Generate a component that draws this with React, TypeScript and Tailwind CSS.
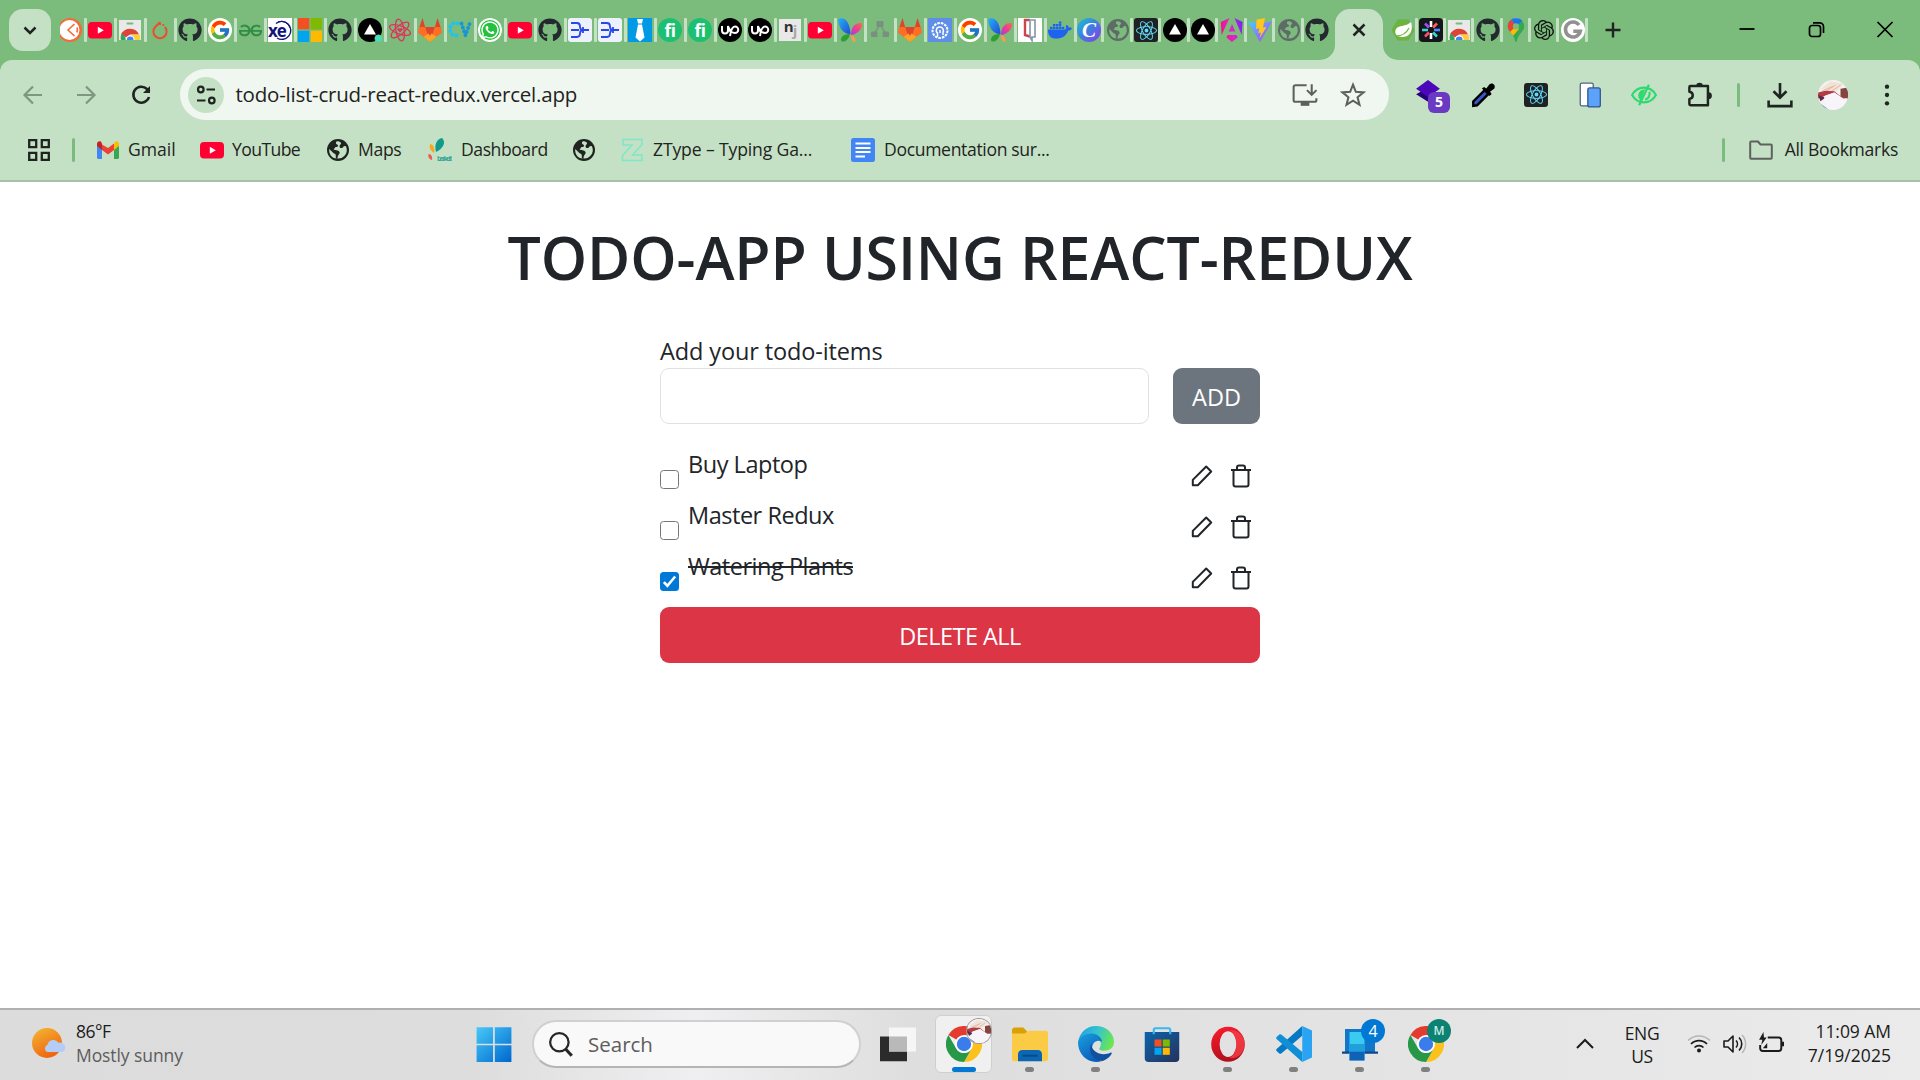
import React from "react";
import { FaGithub, FaWhatsapp } from "react-icons/fa";
import { FcGoogle } from "react-icons/fc";
import { SiReact, SiDocker, SiGeeksforgeeks, SiOpenai } from "react-icons/si";

type P = { children?: React.ReactNode; s?: number; className?: string };
const Svg = ({ children, s = 24, className = "" }: P) => (
  <svg width={s} height={s} viewBox="0 0 24 24" fill="none" className={"block shrink-0 " + className}>
    {children}
  </svg>
);

const YouTube = () => (
  <Svg>
    <rect x="0" y="4" width="24" height="16.5" rx="4" fill="#ff0033" />
    <path d="M9.8 8.8v7l6-3.5z" fill="#fff" />
  </Svg>
);
const Github = () => <FaGithub size={24} color="#24292f" />;
const Google = () => (
  <div className="flex size-6 items-center justify-center rounded-full bg-white">
    <FcGoogle size={22} />
  </div>
);
const Postman = () => (
  <Svg>
    <defs>
      <clipPath id="postman"><path d="M2 0h22v24H2z" /></clipPath>
    </defs>
    <g clipPath="url(#postman)">
      <circle cx="12" cy="12" r="12" fill="#f26b3a" />
      <circle cx="11.500" cy="12" r="10" fill="#fff" />
      <path d="m16.500 6-6.500 6 6.500 6M18.800 9.500c.8 1.500.8 3.500 0 5" stroke="#f26b3a" strokeWidth="1.600" />
    </g>
  </Svg>
);
const WebStore = () => (
  <Svg>
    <path d="M1 2h22v20H1z" fill="#e9e9e9" />
    <rect x="8.5" y="4.5" width="7" height="2" rx="1" fill="#7bbb7c" />
    <path d="M3 22a9.5 9.5 0 0 1 1.5-8l4 8z" fill="#34a853" />
    <path d="M3.5 15.5a10 10 0 0 1 17.5 1H12l-4 3z" fill="#db4437" />
    <path d="M13 16.5h8.5A9 9 0 0 1 22 22h-6z" fill="#ffcd40" />
    <path d="M7.5 22a4.6 4.6 0 0 1 9.2 0z" fill="#fff" />
    <path d="M8.8 22a3.4 3.4 0 0 1 6.8 0z" fill="#4285f4" />
  </Svg>
);
const Torch = () => (
  <Svg>
    <path d="M12 4.2 7.2 9a6.6 6.6 0 1 0 9.6 0M12 4.2V7" stroke="#ee4c2c" strokeWidth="2" />
    <circle cx="15.3" cy="7" r="1.1" fill="#ee4c2c" />
  </Svg>
);
const Xe = () => (
  <div className="relative flex size-6 items-center bg-white">
    <Svg className="absolute inset-0">
      <path d="M8 5.5A9 9 0 1 1 9 20" stroke="#13137a" strokeWidth="1.4" />
      <path d="M10 4a9 9 0 0 1 12 6" stroke="#13137a" strokeWidth="1" />
    </Svg>
    <span className="relative font-['Open_Sans',sans-serif] text-[17px] leading-none font-bold tracking-[-1px] text-[#13137a]">xe</span>
  </div>
);
const Microsoft = () => (
  <Svg>
    <path d="M0 0h11.3v11.3H0z" fill="#f25022" />
    <path d="M12.7 0H24v11.3H12.7z" fill="#7fba00" />
    <path d="M0 12.7h11.3V24H0z" fill="#00a4ef" />
    <path d="M12.7 12.7H24V24H12.7z" fill="#ffb900" />
  </Svg>
);
const Vercel = ({ dot = false }: { dot?: boolean }) => (
  <Svg>
    <circle cx="12" cy="12" r="12" fill="#000" />
    <path d="m12 6 6 10.5H6z" fill="#fff" />
    {dot && <circle cx="20.5" cy="20.5" r="3.7" fill="#45dfc0" stroke="#7bbb7c" strokeWidth=".6" />}
  </Svg>
);
const ReactHeart = () => (
  <Svg>
    <g stroke="#e0335b" strokeWidth="1.3">
      <ellipse cx="12" cy="12" rx="11" ry="4.2" transform="rotate(20 12 12)" />
      <ellipse cx="12" cy="12" rx="11" ry="4.2" transform="rotate(80 12 12)" />
      <ellipse cx="12" cy="12" rx="11" ry="4.2" transform="rotate(140 12 12)" />
    </g>
    <path d="M12 14.5 9.5 12c-1-1.6 1.4-3 2.5-1.2 1.1-1.800 3.500-.4 2.500 1.200z" fill="#e0335b" />
  </Svg>
);
const Gitlab = () => (
  <Svg>
    <path d="m12 24 4.500-13.500h-9z" fill="#e24329" />
    <path d="M4.500 0 1 10.500h6.500zM19.500 0 23 10.500h-6.500z" fill="#e24329" />
    <path d="m1 9-1 5.500L12 24 7 9zM23 9l1 5.500L12 24l5-15z" fill="#fc6d26" />
    <path d="M12 24 5.500 18.800 12 14.500l6.500 4.300z" fill="#fca326" />
    <path d="M7 9h10l-5 9z" fill="#e24329" />
  </Svg>
);
const Cv = () => (
  <Svg>
    <path d="M9.500 5.500C5 3.500 2 7 2 11s3 8 8.500 6" stroke="#1fc3ee" strokeWidth="3.800" strokeLinecap="round" strokeDasharray=".1 4.200" />
    <path d="m13.500 5.500 4 12 4.500-13" stroke="#1597d4" strokeWidth="3.800" strokeLinecap="round" strokeDasharray=".1 4" />
  </Svg>
);
const WhatsApp = () => (
  <div className="flex size-6 items-center justify-center rounded-full bg-[#25c13d] ring-2 ring-white ring-inset">
    <FaWhatsapp size={20} color="#fff" />
  </div>
);
const Merge = () => (
  <Svg>
    <rect width="24" height="24" rx="3" fill="#edf1fb" />
    <path d="M3 5h6c2 0 3 1 3 3.500S13 12 15 12h6M3 12h8M3 19h6c2 0 3-1 3-3.500s1-3.500 3-3.500" stroke="#2747e8" strokeWidth="1.800" />
    <path d="M15 9v6" stroke="#2747e8" strokeWidth="1.800" />
  </Svg>
);
const Tie = () => (
  <Svg>
    <path d="M0 0h24v24H0z" fill="#0099e6" />
    <path d="M9 1h6l-1 4.500h-4zM10 6.500h4l2.500 13L12 23.500l-4.500-4z" fill="#fff" />
  </Svg>
);
const Fiverr = () => (
  <div className="flex size-6 items-center justify-center rounded-full bg-[#1dbf73] font-['Open_Sans',sans-serif] text-[17px] leading-none font-bold tracking-[-0.400px] text-white">
    fi
  </div>
);
const Upwork = () => (
  <Svg>
    <circle cx="12" cy="12" r="12" fill="#000" />
    <path d="M4 8v4.500a3 3 0 0 0 6 0V8c.8 3.500 2 5.500 3.500 6.500M12 18c.6-4 1.500-9.500 5-9.500a3.200 3.200 0 0 1 0 6.500c-3 0-5-2.500-6-5" stroke="#fff" strokeWidth="2" />
  </Svg>
);
const Nj = () => (
  <div className="flex size-6 items-center justify-center p-px">
    <div className="flex size-full justify-center bg-[#e9e9e9] font-['Open_Sans',sans-serif] text-[15px] leading-[14px] font-bold tracking-[-1px]">
      <span className="text-[#333]">n</span>
      <span className="pt-1 text-[#aaa]">j</span>
    </div>
  </div>
);
const Butterfly = () => (
  <Svg>
    <defs>
      <linearGradient id="wing1" x1="0" y1="0" x2="1" y2="1">
        <stop offset="0" stopColor="#21b6f2" />
        <stop offset="1" stopColor="#2348d8" />
      </linearGradient>
      <linearGradient id="wing2" x1="1" y1="0" x2="0" y2="1">
        <stop offset="0" stopColor="#fb6a3d" />
        <stop offset=".5" stopColor="#ee3c96" />
        <stop offset="1" stopColor="#a13ce0" />
      </linearGradient>
    </defs>
    <path d="M0 1c6-3 12 2 12.500 15C4 16 1 9 0 1z" fill="url(#wing1)" />
    <path d="M13 17c0-8 4-12 10-12 2.500 0 1 10-10 12z" fill="url(#wing2)" />
    <path d="M12 16c-4 0-8 1-9 5s7 4 9-5z" fill="#2f9e35" />
    <path d="M13 17c3 0 6 5 4 7-2 0-4-2-4-7z" fill="#fb9a4b" />
  </Svg>
);
const Cluster = () => (
  <Svg>
    <g fill="#7b8f80">
      <rect x="8.500" y="3" width="7" height="6" rx="1" />
      <rect x="3" y="13.500" width="6.500" height="5.500" rx="1" />
      <rect x="14.500" y="13.500" width="6.500" height="5.500" rx="1" />
    </g>
    <path d="m10.500 9-4 6M13.500 9l4 6" stroke="#7b8f80" strokeWidth="1.300" />
  </Svg>
);
const Gear = () => (
  <Svg>
    <path d="M0 0h24v24H0z" fill="#5f8ee8" />
    <circle cx="12" cy="12.500" r="7.500" stroke="#fff" strokeWidth="2" strokeDasharray="2.600 1" />
    <path d="M9.500 19v-4c-2-1-1.500-6 2-6s4.500 3 3.500 5.500V17M12 12v3" stroke="#fff" strokeWidth="1.500" />
  </Svg>
);
const Book = () => (
  <Svg>
    <path d="M0 0h24v24H0z" fill="#fff" />
    <path d="M12 2H7v15l5 1.500" stroke="#c9474b" strokeWidth="2.400" />
    <path d="M11 2h6v17h-3v3.500L12 19V3" stroke="#8593a8" strokeWidth="1.600" />
  </Svg>
);
const Canva = () => (
  <div className="flex size-6 items-center justify-center rounded-full bg-linear-to-br from-[#00c4cc] via-[#3e7be0] to-[#7d2ae8] font-['Liberation_Serif',serif] text-[21px] leading-none font-bold text-white italic">
    C
  </div>
);
const Globe = ({ c = "#5f6b66", bg = "#7bbb7c" }: { c?: string; bg?: string }) => (
  <Svg>
    <circle cx="12" cy="12" r="11" fill={c} />
    <path d="M11 3.300c-1.500 1-1.500 2.500 0 3.200 2 .8 1 2.500-1 2.500-1.500 0-1 2-2.500 2 1 2 5 .5 6 3 .8 2-2 2.500-2 6.500C6 21 2.500 16 3.300 11l4 4c1 .8 2.500.5 2.500 2.500v2.500c5 2 11-2 11-8 0-1.500-.5-3-1.200-4-1 0-2 .2-2.600 1.200-1 1.500-3.500 1-3.500-1 0-1.500 2-1.500 1.500-3.400-1.500-1.200-2.500-1.500-4-1.500z" fill={bg} />
  </Svg>
);
const ReactTile = () => (
  <div className="flex size-6 items-center justify-center rounded-[3px] bg-[#1f2223]">
    <SiReact size={21} color="#61dafb" />
  </div>
);
const Angular = () => (
  <Svg>
    <defs>
      <linearGradient id="ng" x1="0" y1=".6" x2="1" y2=".3">
        <stop offset="0" stopColor="#f3117e" />
        <stop offset=".5" stopColor="#e025c8" />
        <stop offset="1" stopColor="#7b22f0" />
      </linearGradient>
    </defs>
    <path d="M14.500 0 22.500 4l-.8 13zM9.500 0 .8 4l.8 13zM17.600 19.500 12 24l-5.600-4.500L7.500 17h9zM8.800 13.500 12 6l3.200 7.500z" fill="url(#ng)" />
  </Svg>
);
const Vite = () => (
  <Svg>
    <defs>
      <linearGradient id="vt" x1="0" y1="0" x2="1" y2="1">
        <stop offset="0" stopColor="#41d1ff" />
        <stop offset="1" stopColor="#bd34fe" />
      </linearGradient>
    </defs>
    <path d="m0 3.500 12 20.500L24 3.500 12 5.500z" fill="url(#vt)" />
    <path d="M17 0 8.500 1.700 8 11l3.300-.7-1 5 2.700-.8-1.500 6L18.500 9l-3.500.6z" fill="#ffc61c" />
  </Svg>
);
const Spring = () => (
  <Svg>
    <path d="M6.500 1.500h11L23.500 12l-6 10.500h-11L.5 12z" fill="#6db33f" />
    <path d="M20 4c2 6 1 15-9 15-6 0-8-4-6-8s10-2 15-7z" fill="#fff" />
    <path d="M5 18c5 0 10-2 13-8" stroke="#6db33f" strokeWidth="1.200" />
  </Svg>
);
const Asterisk = () => (
  <Svg>
    <rect width="24" height="24" rx="4" fill="#15161a" />
    <g strokeWidth="2.600">
      <path d="M12 3v6" stroke="#fff" />
      <path d="m18 5.500-4 4" stroke="#ff5c5c" />
      <path d="M21 12h-6" stroke="#4b8cff" />
      <path d="m18 18.500-4-4" stroke="#38d6ce" />
      <path d="M12 21v-6" stroke="#fff" />
      <path d="m6 18.500 4-4" stroke="#ff4f70" />
      <path d="M3 12h6" stroke="#38d6ce" />
      <path d="m6 5.500 4 4" stroke="#a04cff" />
    </g>
  </Svg>
);
const MapsPin = () => (
  <Svg>
    <defs>
      <clipPath id="pin">
        <path d="M12 0a8.300 8.300 0 0 0-8.300 8.300c0 5 6.300 7.700 7.500 15 .2.900 1.400.9 1.600 0 1.200-7.300 7.500-10 7.500-15A8.300 8.300 0 0 0 12 0z" />
      </clipPath>
    </defs>
    <g clipPath="url(#pin)">
      <path d="M0 0h24v24H0z" fill="#34a853" />
      <path d="M0 8 7 0h14l-9 8.300z" fill="#4285f4" />
      <path d="M0 0h6l6 8.300L5 15 0 12z" fill="#ea4335" />
      <path d="m5 15 7-7 3 3-7 8z" fill="#fbbc04" />
      <path d="m12 8.300 8-7H8z" fill="#1a73e8" />
    </g>
    <circle cx="12" cy="8.300" r="3.100" fill="#7bbb7c" />
  </Svg>
);
const GrayG = () => (
  <Svg>
    <circle cx="12" cy="12" r="12" fill="#fff" />
    <path d="M18 7A7.500 7.500 0 1 0 19.300 13.200h-7" stroke="#919191" strokeWidth="3.600" />
  </Svg>
);
const Geeks = () => <SiGeeksforgeeks size={23} color="#2f8d46" />;
const Docker = () => <SiDocker size={24} color="#1d63ed" />;
const OpenAi = () => <SiOpenai size={20} color="#111" />;

const leadingTabs = [
  Postman, YouTube, WebStore, Torch, Github, Google, Geeks, Xe, Microsoft, Github,
  () => <Vercel dot />, ReactHeart, Gitlab, Cv, WhatsApp, YouTube, Github, Merge, Merge, Tie,
  Fiverr, Fiverr, Upwork, Upwork, Nj, YouTube, Butterfly, Cluster, Gitlab, Gear,
  Google, Butterfly, Book, Docker,
];
const middleTabs = [Canva, Globe, ReactTile, Vercel, Vercel, Angular, Vite, Globe, Github];
const trailingTabs = [Spring, Asterisk, WebStore, Github, MapsPin, OpenAi, GrayG];

const Sep = () => <span className="block h-6 w-[3px] shrink-0 rounded-[1px] bg-[#c5e1c5]" />;

function TabStrip() {
  return (
    <div className="flex h-[60px] bg-[#7bbb7c]">
      <button className="mt-[9px] ml-[9px] flex size-[42px] shrink-0 items-center justify-center rounded-[14px] bg-[#c5e1c5]">
        <Svg>
          <path d="m6.500 9.500 5.500 5.500 5.500-5.500" stroke="#1f2421" strokeWidth="2.500" />
        </Svg>
      </button>
      <div className="ml-1.5 flex h-[60px] items-center">
        {leadingTabs.map((Icon, i) => (
          <div key={i} className="flex w-[30px] shrink-0 items-center justify-between pl-px">
            <span className="flex size-6 items-center justify-center"><Icon /></span>
            <Sep />
          </div>
        ))}
      </div>
      <div className="-ml-px flex h-[60px] items-center">
        {middleTabs.map((Icon, i) => (
          <div key={i} className="flex w-[28.5px] shrink-0 items-center pl-px">
            <span className="flex size-6 shrink-0 items-center justify-center"><Icon /></span>
            {i < middleTabs.length - 1 && <Sep />}
          </div>
        ))}
      </div>
      <div className="mt-[9px] ml-[2px] flex items-end">
        <Svg s={15} className="-ml-[15px]">
          <path d="M24 0v24H0A24 24 0 0 0 24 0z" fill="#c5e1c5" />
        </Svg>
        <div className="flex h-[51px] w-12 items-center justify-center rounded-t-[15px] bg-[#c5e1c5] pb-[9px]">
          <Svg>
            <path d="m6.500 6.500 11 11M17.500 6.500l-11 11" stroke="#1f2421" strokeWidth="2.500" />
          </Svg>
        </div>
        <Svg s={15} className="-mr-[15px]">
          <path d="M0 0v24h24A24 24 0 0 1 0 0z" fill="#c5e1c5" />
        </Svg>
      </div>
      <div className="ml-[7px] flex h-[60px] items-center">
        {trailingTabs.map((Icon, i) => (
          <div key={i} className="flex w-[28.400px] shrink-0 items-center pl-px">
            <span className="flex size-6 shrink-0 items-center justify-center"><Icon /></span>
            <Sep />
          </div>
        ))}
      </div>
      <div className="ml-[13px] flex h-[60px] items-center">
        <Svg>
          <path d="M12 4.500v15M4.500 12h15" stroke="#1f2421" strokeWidth="2.400" />
        </Svg>
      </div>
      <div className="mr-[23px] ml-auto flex h-[60px] items-center gap-[45px]">
        <Svg><path d="M4.500 11h15" stroke="#000" strokeWidth="1.800" /></Svg>
        <Svg>
          <rect x="5.500" y="7.500" width="11" height="11" rx="2.500" stroke="#000" strokeWidth="1.700" />
          <path d="M9 4.800h6.500a4 4 0 0 1 4 4V15" stroke="#000" strokeWidth="1.700" />
        </Svg>
        <Svg><path d="m4.500 4 15 15M19.500 4l-15 15" stroke="#000" strokeWidth="1.700" /></Svg>
      </div>
    </div>
  );
}

function Avatar({ size }: { size: number }) {
  return (
    <Svg s={size}>
      <defs>
        <clipPath id="avatar"><circle cx="12" cy="12" r="12" /></clipPath>
      </defs>
      <g clipPath="url(#avatar)">
        <path d="M0 0h24v24H0z" fill="#f6f2f3" />
        <path d="m2 7 8-6 11 2-7 7z" fill="#f3e3d7" />
        <path d="m3 9 9-4M5 10l9-6M8 11l10-7" stroke="#d9b29c" strokeWidth=".7" />
        <path d="m0 10 6-1.500 7 .5 5 4 3-6 3 1v6l-4 1-7-5-6 2-7 3z" fill="#b23b45" />
        <path d="m18 7 6-1v9l-6-2z" fill="#84453f" />
        <path d="m0 12 6 2-4 3z" fill="#5d2b48" />
        <path d="m5 13 8-3 9 6-2 8H5z" fill="#f7f4fa" />
        <path d="m1 19 7 5" stroke="#3f55b5" strokeWidth="1.200" />
      </g>
    </Svg>
  );
}

function Toolbar() {
  return (
    <div className="bg-[#7bbb7c]">
      <div className="flex h-[65px] items-center rounded-t-[12px] bg-[#c5e1c5] pt-[4px] pl-[21px]">
        <Svg><path d="M21 12H4M12 3.500 3.500 12l8.500 8.500" stroke="#7f9681" strokeWidth="2.200" /></Svg>
        <Svg className="ml-[29px]"><path d="M3 12h17M12 3.500l8.500 8.500-8.500 8.500" stroke="#7f9681" strokeWidth="2.200" /></Svg>
        <Svg className="ml-[31px]">
          <path d="M20 14a8 8 0 1 1-2-8l2.500 2.500" stroke="#1f2421" strokeWidth="2.500" />
          <path d="M21 3v7h-7z" fill="#1f2421" />
        </Svg>
        <div className="ml-[27px] flex h-[51px] w-[1209px] items-center rounded-full bg-[#f0f7f0] pl-[7.500px]">
          <div className="flex size-9 items-center justify-center rounded-full bg-[#c5e1c5]">
            <Svg>
              <circle cx="6.800" cy="6.500" r="2.800" stroke="#1f2421" strokeWidth="2.200" />
              <path d="M12.500 6.500H21M3 17.500h8.500" stroke="#1f2421" strokeWidth="2.200" />
              <circle cx="17.800" cy="17.500" r="2.800" stroke="#1f2421" strokeWidth="2.200" />
            </Svg>
          </div>
          <span className="ml-3 text-[20.500px] tracking-[-0.220px] text-[#1f2421]">todo-list-crud-react-redux.vercel.app</span>
          <Svg s={26} className="mr-[22px] ml-auto">
            <path d="M13.500 3H3.200C2 3 1.500 3.500 1.500 4.500v12.300c0 1 .5 1.500 1.700 1.500h17.600c1.200 0 1.700-.5 1.700-1.500V15" stroke="#5c615e" strokeWidth="1.900" />
            <path d="M8 18h8v4H8z" fill="#5c615e" />
            <path d="M18.200 2v9M13.800 7.500l4.400 4.400 4.400-4.400" stroke="#5c615e" strokeWidth="1.900" />
          </Svg>
          <Svg s={26} className="mr-[23px]">
            <path d="m12 2.500 2.600 6.600 7.100.5-5.500 4.500 1.800 7-6-3.800-6 3.800 1.800-7-5.500-4.500 7.100-.5z" stroke="#5c615e" strokeWidth="1.900" />
          </Svg>
        </div>
        <div className="relative ml-[26px] size-8">
          <Svg s={26}>
            <path d="m1 14 11 7 11-7-11-6z" fill="#25007a" />
            <path d="m1 9 11 7.500L23 9 12 1z" fill="#4b08b8" />
          </Svg>
          <span className="absolute top-[13px] left-[13px] flex h-[21px] w-[22px] items-center justify-center rounded-md bg-[#6a3bc2] text-[14px] leading-none font-bold text-white">5</span>
        </div>
        <Svg s={26} className="ml-[23px]">
          <path d="M3 22v-4L13.500 7.500l3.500 3.500L6.500 21.500z" fill="#3658c9" stroke="#000" strokeWidth="2.200" />
          <path d="m11 6 2-1.500 2 1.500 3-4c3-2 6 1 4.500 4l-4 3 1.500 2-2 2z" fill="#000" />
        </Svg>
        <div className="ml-[28px]"><ReactTile /></div>
        <Svg s={26} className="ml-[29px]">
          <path d="M3 2.500q0-1.500 1.500-1.500h9q1.500 0 1.500 1.500V22H4.500Q3 22 3 20.500z" fill="#fff" stroke="#53637e" strokeWidth="1.200" />
          <rect x="10" y="5.500" width="11.500" height="17.500" rx="1.800" fill="#5ba2fa" stroke="#35558c" strokeWidth="1.200" />
        </Svg>
        <Svg s={26} className="ml-[28px]">
          <path d="M1 12c5-9 17-9 22 0-5 9-17 9-22 0z" stroke="#2ed96f" strokeWidth="2" />
          <path d="M13 7c-7-1-8 8-4 10z" fill="#2ed96f" />
          <path d="m16.500 2.500-9 19M17 9c1 3-1 7-4 7" stroke="#2ed96f" strokeWidth="2" />
        </Svg>
        <Svg s={27} className="ml-[29px]">
          <path d="M4 4.500h15.500v17H4q-1 0-1-1V16c4-.5 4-6 0-6.500V5.500q0-1 1-1z" stroke="#1f2421" strokeWidth="2.200" strokeLinejoin="round" />
          <path d="M9 4.500a3 3 0 0 1 6 0zM20 10a3 3 0 0 1 0 6z" fill="#1f2421" />
        </Svg>
        <span className="ml-[24px] h-6 w-[3px] rounded-full bg-[#7bbb7c]" />
        <Svg s={26} className="ml-[27px]">
          <path d="M12 1v13M6 8.500l6 6 6-6M1.500 17v5.300h21V17" stroke="#1f2421" strokeWidth="2.400" />
        </Svg>
        <div className="ml-[25px]"><Avatar size={30} /></div>
        <Svg s={26} className="ml-[26px]">
          <g fill="#1f2421">
            <circle cx="12" cy="4.300" r="2" />
            <circle cx="12" cy="12" r="2" />
            <circle cx="12" cy="19.700" r="2" />
          </g>
        </Svg>
      </div>
    </div>
  );
}

const Gmail = () => (
  <Svg>
    <path d="M1 7v12.500C1 20.300 1.700 21 2.500 21H6V9z" fill="#4285f4" />
    <path d="M23 7v12.500c0 .8-.7 1.500-1.500 1.500H18V9z" fill="#34a853" />
    <path d="M18 6.500V12l5-4V6c0-2.500-2.700-3.500-4-2.300z" fill="#fbbc04" />
    <path d="M6 6.500V12l6 4.500 6-4.500V5.500L12 10z" fill="#ea4335" />
    <path d="M1 6v2l5 4V5.500L5 3.700C3.500 2.700 1 3.500 1 6z" fill="#c5221f" />
  </Svg>
);
const Baskets = () => (
  <div className="relative size-6 overflow-hidden">
    <Svg>
      <path d="M8 14C6 6 9 1 14 0c4 4 2 10-6 14z" fill="#109a8c" />
      <path d="M6 15C1 12 1 8 2.500 6 6 7 7 11 6 15z" fill="#f7a823" />
      <path d="M4 22c-4-1-4-5-3.500-6 3 0 4 3 3.500 6z" fill="#ee5a4f" />
    </Svg>
    <span className="absolute bottom-0 left-[9px] text-[7px] leading-none font-bold tracking-[-1.800px] text-[#3aa79a]">basketi</span>
  </div>
);
const ZType = () => (
  <Svg>
    <path d="M2 1.500h19v5L11.500 17H21v5.500H1.500v-5L11 7H2z" stroke="#7de8c8" strokeWidth="1.500" />
  </Svg>
);
const Docs = () => (
  <Svg>
    <rect width="24" height="24" rx="2.500" fill="#4285f4" />
    <path d="M4.500 5.500h15M4.500 10h15M4.500 14h15M4.500 18.500h9.500" stroke="#fff" strokeWidth="2.200" />
  </Svg>
);

function Bookmarks() {
  return (
    <div className="flex h-[57px] items-start border-b-2 border-[#a6c1a7] bg-[#c5e1c5] pt-[13px] pl-[27px] text-[17.600px] leading-[23px] tracking-[-0.350px] text-[#1f2421]">
      <Svg>
        <path d="M2.200 2.200h7v7h-7zM14.800 2.200h7v7h-7zM2.200 14.800h7v7h-7zM14.800 14.800h7v7h-7z" stroke="#1f2421" strokeWidth="2.300" />
      </Svg>
      <span className="ml-[21px] h-6 w-[3px] rounded-full bg-[#7bbb7c]" />
      <div className="ml-[21px] flex w-[104px] shrink-0 gap-2"><Gmail /><span className="tracking-normal">Gmail</span></div>
      <div className="flex w-[126px] shrink-0 gap-2"><YouTube /><span className="tracking-[-0.600px]">YouTube</span></div>
      <div className="flex w-[102px] shrink-0 gap-2"><Globe c="#1f2421" bg="#c5e1c5" /><span>Maps</span></div>
      <div className="flex w-[144px] shrink-0 gap-2"><Baskets /><span className="ml-px tracking-[-0.450px]">Dashboard</span></div>
      <div className="flex w-[49px] shrink-0"><Globe c="#1f2421" bg="#c5e1c5" /></div>
      <div className="flex w-[230px] shrink-0 gap-2"><ZType /><span className="tracking-[-0.150px]">ZType – Typing Ga...</span></div>
      <div className="flex shrink-0 gap-2"><Docs /><span className="ml-px">Documentation sur...</span></div>
      <div className="mr-[22px] ml-auto flex">
        <span className="h-6 w-[3px] rounded-full bg-[#7bbb7c]" />
        <Svg className="ml-6">
          <path d="M1.200 4.500q0-1 1-1H9l2.500 3h10.300q1 0 1 1v12.300q0 1-1 1H2.200q-1 0-1-1z" stroke="#5c615e" strokeWidth="2" />
        </Svg>
        <span className="ml-3 tracking-[-0.300px]">All Bookmarks</span>
      </div>
    </div>
  );
}

const Pencil = () => (
  <Svg>
    <path d="M2.800 21.200v-5.300L16.200 2.500l5 5L7.800 21.200z" stroke="#212529" strokeWidth="2" strokeLinejoin="round" />
  </Svg>
);
const Trash = () => (
  <Svg>
    <path d="M2 6h20M4.500 6v14.500q0 2 2 2h11q2 0 2-2V6M8 6V3.500q0-2 2-2h4q2 0 2 2V6" stroke="#212529" strokeWidth="2" />
  </Svg>
);

function Check({ on }: { on: boolean }) {
  return on ? (
    <span className="flex size-[19.500px] items-center justify-center rounded-[3.500px] bg-[#0078d7]">
      <Svg s={17}><path d="m4 13 5 5L20 5" stroke="#fff" strokeWidth="3.600" /></Svg>
    </span>
  ) : (
    <span className="block size-[19.500px] rounded-[3.500px] border-[1.500px] border-[#767676] bg-white" />
  );
}

const todos = [
  { text: "Buy Laptop", done: false },
  { text: "Master Redux", done: false },
  { text: "Watering Plants", done: true },
];

function TodoApp() {
  return (
    <main className="flex flex-1 flex-col items-center bg-white text-[#212529]">
      <h1 className="mt-[39px] text-[59px] leading-[72px] font-semibold tracking-[-0.100px] whitespace-nowrap">TODO-APP USING REACT-REDUX</h1>
      <div className="mt-[41px] w-[600px] text-[23.500px]">
        <label className="block h-[34px] leading-[35px] tracking-[-0.120px]">Add your todo-items</label>
        <div className="flex justify-between">
          <div className="h-14 w-[489px] rounded-[9px] border-[1.500px] border-[#dee2e6]" />
          <button className="flex h-14 w-[87px] items-center justify-center rounded-[9px] bg-[#6c757d] pt-1 text-white">ADD</button>
        </div>
        <ul className="mt-[23px]">
          {todos.map((t) => (
            <li key={t.text} className="flex h-[51px]">
              <span className="mt-[22.500px] -ml-[0.500px]"><Check on={t.done} /></span>
              <span className="relative ml-[9px] h-9 leading-[35px] tracking-[-0.470px]">
                {t.text}
                {t.done && <span className="absolute top-[17px] left-0 h-0.5 w-full bg-[#212529]" />}
              </span>
              <span className="mt-[17px] mr-[7px] ml-auto flex gap-[15px]"><Pencil /><Trash /></span>
            </li>
          ))}
        </ul>
        <button className="mt-[7px] flex h-14 w-full items-center justify-center rounded-[9px] bg-[#dc3545] pt-1 tracking-[-0.550px] text-white">DELETE ALL</button>
      </div>
    </main>
  );
}

const Chrome = () => (
  <Svg s={36}>
    <path d="M12 12 1.600 6A12 12 0 0 1 22.400 6z" fill="#e33b2e" />
    <path d="M12 6h10.400A12 12 0 0 1 12 24l5.200-9z" fill="#fcc21b" />
    <path d="m1.600 6 5.200 9a6 6 0 0 0 10.400 0L12 24A12 12 0 0 1 1.600 6z" fill="#279847" />
    <circle cx="12" cy="12" r="6" fill="#fff" />
    <circle cx="12" cy="12" r="4.800" fill="#3b7cec" />
  </Svg>
);
const Folder = () => (
  <Svg s={36}>
    <path d="M0 3q0-2 2-2h5.500L10 3.500V8H0z" fill="#dba006" />
    <path d="M0 5h8.500L11 3.200h11.500Q24 3.200 24 5v17q0 1.500-1.500 1.500h-21Q0 23.500 0 22z" fill="#fccb45" />
    <path d="M4 23.500v-4.500Q4 16 7 16h10q3 0 3 3v4.500z" fill="#0b67b6" />
    <path d="M7 19.800h10" stroke="#064a88" strokeWidth="1.300" />
  </Svg>
);
const Edge = () => (
  <Svg s={36}>
    <defs>
      <linearGradient id="eg1" x1="0" y1=".2" x2="1" y2=".5">
        <stop offset="0" stopColor="#1f9fe0" />
        <stop offset=".5" stopColor="#35c4cf" />
        <stop offset="1" stopColor="#6be650" />
      </linearGradient>
      <linearGradient id="eg2" x1="0" y1="0" x2=".6" y2="1">
        <stop offset="0" stopColor="#1aa0dd" />
        <stop offset="1" stopColor="#0b5cbb" />
      </linearGradient>
    </defs>
    <path d="M0 11C1 4 6 0 12 0c7 0 12 5 12 10.500 0 4-3 6-6.500 6-2.500 0-4-.8-3-2 2-3 0-7-5-7-4 0-8 1.500-9.500 3.500z" fill="url(#eg1)" />
    <path d="M0 11c1-4 5-6 9-6 4 0 7 3 7 5.500-5-3-9 4-5 9 2 2.500 4 3.500 5 3.800C8 26 0 20 0 11z" fill="url(#eg2)" />
    <path d="M9 11.500c-3 6 2 12 7.500 11.800 3-1 5-3 6-5 0-.8-.5-.8-1-.5-5 2.500-13 0-12.500-6.300z" fill="#10509f" />
  </Svg>
);
const Store = () => (
  <Svg s={36}>
    <defs>
      <linearGradient id="st" x1="0" y1="0" x2="1" y2="1">
        <stop offset="0" stopColor="#0c64ac" />
        <stop offset="1" stopColor="#26325c" />
      </linearGradient>
    </defs>
    <path d="M.5 4h23v17.500q0 2.500-2.500 2.500H3Q.5 24 .5 21.500z" fill="url(#st)" />
    <path d="M6.500 5.500V2.500Q6.500 1.500 7.500 1.500h9q1 0 1 1v3" stroke="#37b8f0" strokeWidth="1.400" />
    <path d="M7 9h4.700v4.700H7z" fill="#f25022" />
    <path d="M12.500 9h4.700v4.700h-4.700z" fill="#7fba00" />
    <path d="M7 14.500h4.700v4.700H7z" fill="#00a4ef" />
    <path d="M12.500 14.500h4.700v4.700h-4.700z" fill="#ffb900" />
  </Svg>
);
const Opera = () => (
  <Svg s={36}>
    <defs>
      <linearGradient id="op" x1="0" y1="0" x2=".3" y2="1">
        <stop offset="0" stopColor="#ff1b2d" />
        <stop offset="1" stopColor="#b0101c" />
      </linearGradient>
    </defs>
    <path fillRule="evenodd" d="M12 .5a11.200 11.700 0 1 0 0 23.400A11.200 11.700 0 0 0 12 .5zm0 3a5.600 8.600 0 1 1 0 17.200A5.600 8.600 0 0 1 12 3.500z" fill="url(#op)" />
    <path d="M13 3c5-1 10 3 10 9.200s-5 10.300-10 9c6-2.500 6-16 0-18.200z" fill="#f5404a" opacity=".8" />
  </Svg>
);
const Code = () => (
  <Svg s={36}>
    <path d="M17.500 0v6.500L3.500 18.300q-.7.500-1.300 0L.4 16.600q-.6-.7 0-1.300z" fill="#0679c4" />
    <path d="m17.500 24 .2-6.500L3.500 5.700q-.7-.5-1.300 0L.4 7.400q-.6.7 0 1.300z" fill="#118fd6" />
    <path d="M17.500 0 24 3v18l-6.500 3z" fill="#2aa4f2" />
  </Svg>
);
const Phone = () => (
  <Svg s={36}>
    <path d="M2 2h20v16H2z" fill="#1277c8" />
    <path d="M0 17h24v1.500H0z" fill="#0b4890" />
    <path d="M5 4h10v19H5z" fill="#3acbf0" />
    <path d="M5 12h10v5H5z" fill="#1f9fdc" />
    <path d="M5 17h10v6H5z" fill="#0f62b5" />
  </Svg>
);

type TaskApp = { Icon: React.ComponentType; mark?: "active" | "open"; badge?: string };
const apps: TaskApp[] = [
  { Icon: Chrome, mark: "active", badge: "avatar" },
  { Icon: Folder, mark: "open" },
  { Icon: Edge, mark: "open" },
  { Icon: Store },
  { Icon: Opera, mark: "open" },
  { Icon: Code, mark: "open" },
  { Icon: Phone, mark: "open", badge: "4" },
  { Icon: Chrome, mark: "open", badge: "M" },
];

function Taskbar() {
  return (
    <footer className="flex h-[72px] border-t-2 border-[#b0b0b0] bg-linear-to-r from-[#dcdcdc] via-[#dedede] to-[#ebebeb] text-[#1b1b1b]">
      <div className="flex w-[475px] shrink-0 pt-[9px] pl-8">
        <Svg s={34} className="mt-[7px]">
          <defs>
            <linearGradient id="sun" x1="0" y1="0" x2=".5" y2="1">
              <stop offset="0" stopColor="#f3b934" />
              <stop offset="1" stopColor="#f0650f" />
            </linearGradient>
          </defs>
          <circle cx="10.600" cy="12" r="10.600" fill="url(#sun)" />
          <path d="M11 18.300a2.600 2.600 0 0 1 0-5c.5-4 6-4.500 7.500-1.500 3-.5 5 1.500 5 3.300 0 1.800-1 3.200-3 3.200z" fill="#b3cdf7" />
        </Svg>
        <div className="ml-[10px] text-[17.500px] leading-6">
          <div className="tracking-[-0.500px]">86°F</div>
          <div className="tracking-[-0.080px] text-[#5c5c5c]">Mostly sunny</div>
        </div>
      </div>
      <div className="flex items-start bg-linear-to-r from-transparent via-[#efeff1] to-transparent">
        <Svg s={38} className="mt-[14px]">
          <defs>
            <linearGradient id="win" gradientUnits="userSpaceOnUse" x1="0" y1="0" x2="22" y2="24">
              <stop offset="0" stopColor="#4cd0fb" />
              <stop offset="1" stopColor="#0069cf" />
            </linearGradient>
          </defs>
          <path d="M1 2h10.400v10.400H1zM12.500 2H23v10.400H12.500zM1 13.400h10.400V24H1zM12.500 13.400H23V24H12.500z" fill="url(#win)" />
        </Svg>
        <div className="mt-[10px] ml-[19px] flex h-[48px] w-[329px] items-center rounded-full border-2 border-[#d0d0d0] border-b-[#b5b5b5] bg-[#f9f9f9] pl-[13px] text-[20.500px] text-[#5d5d5d]">
          <Svg s={27}>
            <circle cx="11" cy="10" r="8.200" stroke="#262626" strokeWidth="2" />
            <path d="m16.500 16 5.500 6" stroke="#262626" strokeWidth="2.800" />
          </Svg>
          <span className="ml-[14px]">Search</span>
        </div>
        <Svg s={36} className="mt-[16px] ml-[19px]">
          <path d="M0 7h18v16.500H0z" fill="#2b2b2b" />
          <path d="M6 1h18v16H6z" fill="#f6f6f6" />
          <path d="M6 7h12v10H6z" fill="#b9b9b9" />
        </Svg>
      </div>
      <div className="ml-[19px] flex">
        {apps.map(({ Icon, mark, badge }, i) => (
          <div
            key={i}
            className={
              "relative mt-[5px] mr-[9px] flex h-[58px] w-[57px] shrink-0 flex-col items-center rounded-md border pt-[10px] " +
              (mark === "active" ? "border-[#cfcfcf] bg-[#f0f0f0]" : "border-transparent")
            }
          >
            <Icon />
            {mark === "active" && <span className="absolute bottom-0 h-[5px] w-6 rounded-full bg-[#0078d4]" />}
            {mark === "open" && <span className="absolute bottom-0 h-[5px] w-[9px] rounded-full bg-[#808080]" />}
            {badge === "avatar" && <span className="absolute top-[3px] right-0 rounded-full ring-1 ring-[#9a9a9a]"><Avatar size={24} /></span>}
            {badge === "4" && <span className="absolute top-[3px] right-[2px] flex size-6 items-center justify-center rounded-full bg-[#0078d4] text-[16px] text-white">4</span>}
            {badge === "M" && <span className="absolute top-[3px] right-[2px] flex size-6 items-center justify-center rounded-full bg-[#0c8273] text-[12px] font-semibold text-[#c8ece4]">M</span>}
          </div>
        ))}
      </div>
      <div className="mr-[29px] ml-auto flex text-[17.500px] leading-6">
        <Svg className="mt-[22px]"><path d="m4 16 8-8 8 8" stroke="#1b1b1b" strokeWidth="2" /></Svg>
        <div className="mt-[12px] ml-[27px] w-9 text-center leading-[23px] tracking-[-0.400px]">ENG<br />US</div>
        <Svg className="mt-[22px] ml-[27px]">
          <path d="M1 8.500a15.500 15.500 0 0 1 22 0" stroke="#b5b5b5" strokeWidth="1.500" />
          <path d="M4 12a11 11 0 0 1 16 0M7.500 15.500a6.500 6.500 0 0 1 9 0" stroke="#1b1b1b" strokeWidth="1.700" />
          <circle cx="12" cy="18.500" r="2" fill="#1b1b1b" />
        </Svg>
        <Svg className="mt-[22px] ml-[12px]">
          <path d="M1 9h4l5-5v16l-5-5H1z" stroke="#1b1b1b" strokeWidth="1.600" strokeLinejoin="round" />
          <path d="M13 8.500a5 5 0 0 1 0 7M16 5.500a9 9 0 0 1 0 13" stroke="#1b1b1b" strokeWidth="1.600" />
          <path d="M19 3a13 13 0 0 1 0 18" stroke="#b5b5b5" strokeWidth="1.500" />
        </Svg>
        <Svg s={26} className="mt-[21px] ml-[11px]">
          <path d="M9 6h10q2.500 0 2.500 2.500v7.500q0 2.500-2.500 2.500H4.500Q2 18.500 2 16v-3" stroke="#1b1b1b" strokeWidth="1.800" />
          <path d="M21.500 10h2.500v4h-2.500zM5 1 1 8h3l-1 5 5-7H5.500zM4.500 16l4-5v5z" fill="#1b1b1b" />
        </Svg>
        <div className="mt-[9px] ml-[23px] w-[84px] text-right whitespace-nowrap">
          <div className="tracking-[-0.050px]">11:09 AM</div>
          <div className="tracking-[0.050px]">7/19/2025</div>
        </div>
      </div>
    </footer>
  );
}

export default function App() {
  return (
    <div className="flex h-[1080px] w-[1920px] flex-col overflow-hidden bg-white font-['Open_Sans','Noto_Sans',sans-serif]">
      <TabStrip />
      <Toolbar />
      <Bookmarks />
      <TodoApp />
      <Taskbar />
    </div>
  );
}
